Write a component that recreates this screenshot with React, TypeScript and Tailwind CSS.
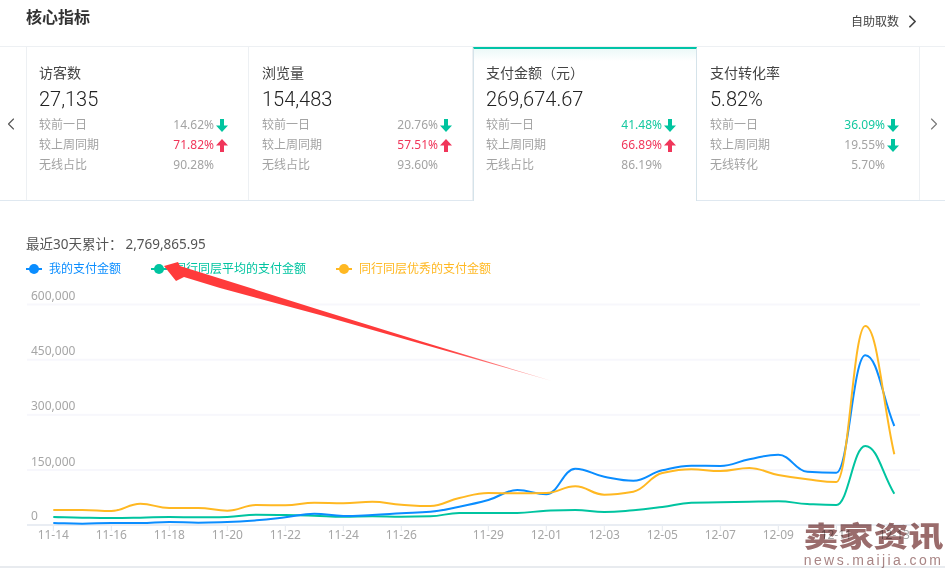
import { ChevronLeft, ChevronRight } from "lucide-react";

interface Metric {
  title: string;
  value: string;
  dayPct: string;
  dayUp: boolean;
  dayHit: boolean;
  weekPct: string;
  weekUp: boolean;
  weekHit: boolean;
  shareLabel: string;
  share: string;
  active?: boolean;
  width: string;
}

const METRICS: Metric[] = [
  { title: "访客数", value: "27,135", dayPct: "14.62%", dayUp: false, dayHit: false, weekPct: "71.82%", weekUp: true, weekHit: true, shareLabel: "无线占比", share: "90.28%", width: "w-[222px] pl-[12px]" },
  { title: "浏览量", value: "154,483", dayPct: "20.76%", dayUp: false, dayHit: false, weekPct: "57.51%", weekUp: true, weekHit: true, shareLabel: "无线占比", share: "93.60%", width: "w-[224px] pl-[13px]" },
  { title: "支付金额（元）", value: "269,674.67", dayPct: "41.48%", dayUp: false, dayHit: true, weekPct: "66.89%", weekUp: true, weekHit: true, shareLabel: "无线占比", share: "86.19%", active: true, width: "w-[224px] pl-[12px]" },
  { title: "支付转化率", value: "5.82%", dayPct: "36.09%", dayUp: false, dayHit: true, weekPct: "19.55%", weekUp: false, weekHit: false, shareLabel: "无线转化", share: "5.70%", width: "w-[223px] pl-[13px]" },
];

const BLUE = [522, 522.7, 522, 522, 521, 521.7, 521, 519.3, 516.3, 512.7, 515, 514, 512.3, 510.7, 505.7, 499, 489, 493.3, 467.7, 475.7, 479.7, 469.3, 464.7, 465, 458.3, 453.7, 470.7, 471.7, 354.3, 425];
const GREEN = [516, 516.7, 517, 516.7, 516, 516.3, 516, 513.7, 514, 514.7, 515.7, 515.3, 515.7, 515.3, 512, 512, 512, 509.7, 509, 511, 509.3, 506, 501.7, 501.3, 500.7, 500.3, 503, 504, 445, 492.7];
const ORANGE = [509, 509, 510, 502.7, 507, 507, 509.7, 504, 504.3, 501.7, 502.3, 500.7, 503.7, 505, 497, 492, 492.3, 492, 485.3, 493.7, 490.7, 472, 468.3, 470, 467, 474, 478.3, 481, 325, 453.3];

const Y_TICKS = [
  { label: "600,000", y: 303.5 },
  { label: "450,000", y: 358.7 },
  { label: "300,000", y: 413.8 },
  { label: "150,000", y: 469 },
];
const X_TICKS = [
  { label: "11-14", i: 0 }, { label: "11-16", i: 2 }, { label: "11-18", i: 4 }, { label: "11-20", i: 6 },
  { label: "11-22", i: 8 }, { label: "11-24", i: 10 }, { label: "11-26", i: 12 }, { label: "11-29", i: 15 },
  { label: "12-01", i: 17 }, { label: "12-03", i: 19 }, { label: "12-05", i: 21 }, { label: "12-07", i: 23 },
  { label: "12-09", i: 25 }, { label: "12-11", i: 27 }, { label: "12-13", i: 29 },
];

const xAt = (i: number) => 53.3 + 29 * i;

// flat tangents at local peaks, same look as the chart lib's smooth lines
function smoothPath(ys: number[]): string {
  const slopes = ys.map((y, i) => {
    if (i === 0) return (ys[1] - y) / 29;
    if (i === ys.length - 1) return (y - ys[i - 1]) / 29;
    const a = (y - ys[i - 1]) / 29;
    const b = (ys[i + 1] - y) / 29;
    if (a * b <= 0) return 0;
    return (2 * a * b) / (a + b);
  });
  let d = `M${xAt(0)} ${ys[0]}`;
  for (let i = 1; i < ys.length; i++) {
    const c = 29 / 2.4;
    d += ` C${xAt(i - 1) + c} ${ys[i - 1] + slopes[i - 1] * c} ${xAt(i) - c} ${ys[i] - slopes[i] * c} ${xAt(i)} ${ys[i]}`;
  }
  return d;
}

function TrendArrow({ up }: { up: boolean }) {
  return (
    <svg width="12" height="13" viewBox="0 0 12 13" className={up ? "text-[#f0365a]" : "text-[#00c49f]"}>
      {up ? (
        <path d="M6 0 L12 6.5 H8 V13 H4 V6.5 H0 Z" fill="currentColor" />
      ) : (
        <path d="M4 0 H8 V6.5 H12 L6 13 L0 6.5 H4 Z" fill="currentColor" />
      )}
    </svg>
  );
}

function StatRow({ label, value, hit, up, showArrow = true }: { label: string; value: string; hit?: boolean; up?: boolean; showArrow?: boolean }) {
  const tone = !hit ? "text-[#a3a3a3]" : up ? "text-[#f0365a]" : "text-[#14c8a0]";
  return (
    <div className="flex h-5 items-center text-xs text-[#a3a3a3]">
      <span className="flex-1">{label}</span>
      <span className={tone}>{value}</span>
      <span className="ml-[2px] flex w-3 justify-center">{showArrow && <TrendArrow up={!!up} />}</span>
    </div>
  );
}

function MetricCard({ metric }: { metric: Metric }) {
  const shell = metric.active
    ? "-mb-px border-x border-[#d5e3ea] bg-gradient-to-b from-[#ecf9f8] via-white to-white bg-[length:100%_24px] bg-no-repeat border-t-2 border-t-[#00c4a7] bg-white pt-[14px]"
    : "border-r border-[#edf0f3] pt-[16px]";
  return (
    <div className={`${metric.width} ${shell} shrink-0 pr-[20px]`}>
      <div className="text-sm leading-5 text-[#444]">{metric.title}</div>
      <div className="mt-[2px] font-['Roboto','Noto_Sans',sans-serif] text-xl leading-7 font-light text-[#222]">{metric.value}</div>
      <div className="mt-[2px]">
        <StatRow label="较前一日" value={metric.dayPct} hit={metric.dayHit} up={metric.dayUp} />
        <StatRow label="较上周同期" value={metric.weekPct} hit={metric.weekHit} up={metric.weekUp} />
        <StatRow label={metric.shareLabel} value={metric.share} showArrow={false} />
      </div>
    </div>
  );
}

function LegendItem({ color, text, label, width }: { color: string; text: string; label: string; width: string }) {
  return (
    <div className={`flex items-center ${width}`}>
      <svg width="18" height="12" viewBox="0 0 18 12">
        <path d="M0 6 H16" stroke={color} strokeWidth="2" />
        <circle cx="8" cy="6" r="5" fill={color} />
      </svg>
      <span className={`ml-[5px] text-xs ${text}`}>{label}</span>
    </div>
  );
}

function Chart() {
  return (
    <svg width="945" height="260" viewBox="0 285 945 260" className="block font-['Noto_Sans','Noto_Sans_CJK_SC',sans-serif]">
      {Y_TICKS.map((t) => (
        <g key={t.label}>
          <rect x="27" y={t.y - 1} width="893" height="2" fill="#f7f7fc" />
          <text x="31" y={t.y - 4.5} fontSize="12" fill="#a6a6a6">{t.label}</text>
        </g>
      ))}
      <rect x="27" y="523" width="893" height="2" fill="#e9edf3" />
      <text x="31" y="519" fontSize="12" fill="#a6a6a6">0</text>
      {X_TICKS.map((t) => (
        <g key={t.label}>
          <path d={`M${xAt(t.i)} 525 V530`} stroke="#e4e8ee" strokeWidth="1" />
          <text x={xAt(t.i)} y="538" fontSize="12" fill="#a6a6a6" textAnchor="middle">{t.label}</text>
        </g>
      ))}
      <path d={smoothPath(GREEN)} fill="none" stroke="#00c4a0" strokeWidth="2" />
      <path d={smoothPath(BLUE)} fill="none" stroke="#0a8dff" strokeWidth="2" />
      <path d={smoothPath(ORANGE)} fill="none" stroke="#ffb822" strokeWidth="2" />
    </svg>
  );
}

export default function App() {
  return (
    <div className="relative flex h-[568px] w-[945px] flex-col overflow-hidden bg-white font-['Noto_Sans','Noto_Sans_CJK_SC',sans-serif]">
      <header className="flex h-[46px] shrink-0 items-start justify-between pl-[26px] pr-[22px]">
        <h1 className="mt-[5px] text-base leading-6 font-bold text-[#333]">核心指标</h1>
        <div className="mt-[11px] flex items-center text-xs leading-5 text-[#444]">
          自助取数
          <ChevronRight size={21} strokeWidth={2} className="ml-[3px] text-[#444]" />
        </div>
      </header>

      <section className="flex h-[155px] shrink-0 border-y border-t-[#edf0f3] border-b-[#dfe8f0]">
        <div className="flex w-[27px] shrink-0 items-center justify-center border-r border-[#edf0f3] pt-[1px]">
          <ChevronLeft size={20} strokeWidth={1.3} className="mr-[5px] text-[#555]" />
        </div>
        {METRICS.map((m) => (
          <MetricCard key={m.title} metric={m} />
        ))}
        <div className="flex flex-1 items-center justify-center pl-[3px]">
          <ChevronRight size={20} strokeWidth={1.3} className="text-[#777]" />
        </div>
      </section>

      <section className="flex-1 border-b-2 border-[#e8ebef] pl-[26px]">
        <div className="mt-[33px] text-[13.5px] leading-5 text-[#555]">
          最近30天累计：<span className="ml-[3px]">2,769,865.95</span>
        </div>
        <div className="mt-[5px] flex h-5 items-center">
          <LegendItem color="#0a8dff" text="text-[#0a8dff]" label="我的支付金额" width="w-[125px]" />
          <LegendItem color="#00c4a0" text="text-[#00c4a0]" label="同行同层平均的支付金额" width="w-[185px]" />
          <LegendItem color="#ffb822" text="text-[#ffb822]" label="同行同层优秀的支付金额" width="w-[170px]" />
        </div>
        <div className="-ml-[26px] mt-[7px]">
          <Chart />
        </div>
      </section>

      {/* annotation pasted over the screenshot */}
      <svg width="945" height="568" viewBox="0 0 945 568" className="pointer-events-none absolute inset-0">
        <defs>
          <linearGradient id="tail" gradientUnits="userSpaceOnUse" x1="440" y1="348" x2="552" y2="381">
            <stop offset="0" stopColor="#ff3b3b" />
            <stop offset="1" stopColor="#ff3b3b" stopOpacity="0.4" />
          </linearGradient>
        </defs>
        <path d="M164 266 L178 262 L180 266 L220 278.5 L320 310 L420 341 L552 381 L420 343.4 L320 315 L220 288 L184 277 L176 281 Z" fill="url(#tail)" />
      </svg>

      <div className="absolute top-[519px] right-[1px] flex w-[141px] flex-col items-center text-[#9a6c6c] mix-blend-multiply">
        <span className="scale-y-80 text-[35px] leading-[35px] font-black">卖家资讯</span>
        <span className="-mt-[1px] font-['Liberation_Sans',sans-serif] text-sm leading-[14px] tracking-[2.4px] whitespace-nowrap text-[#a98585]">news.maijia.com</span>
      </div>
    </div>
  );
}
